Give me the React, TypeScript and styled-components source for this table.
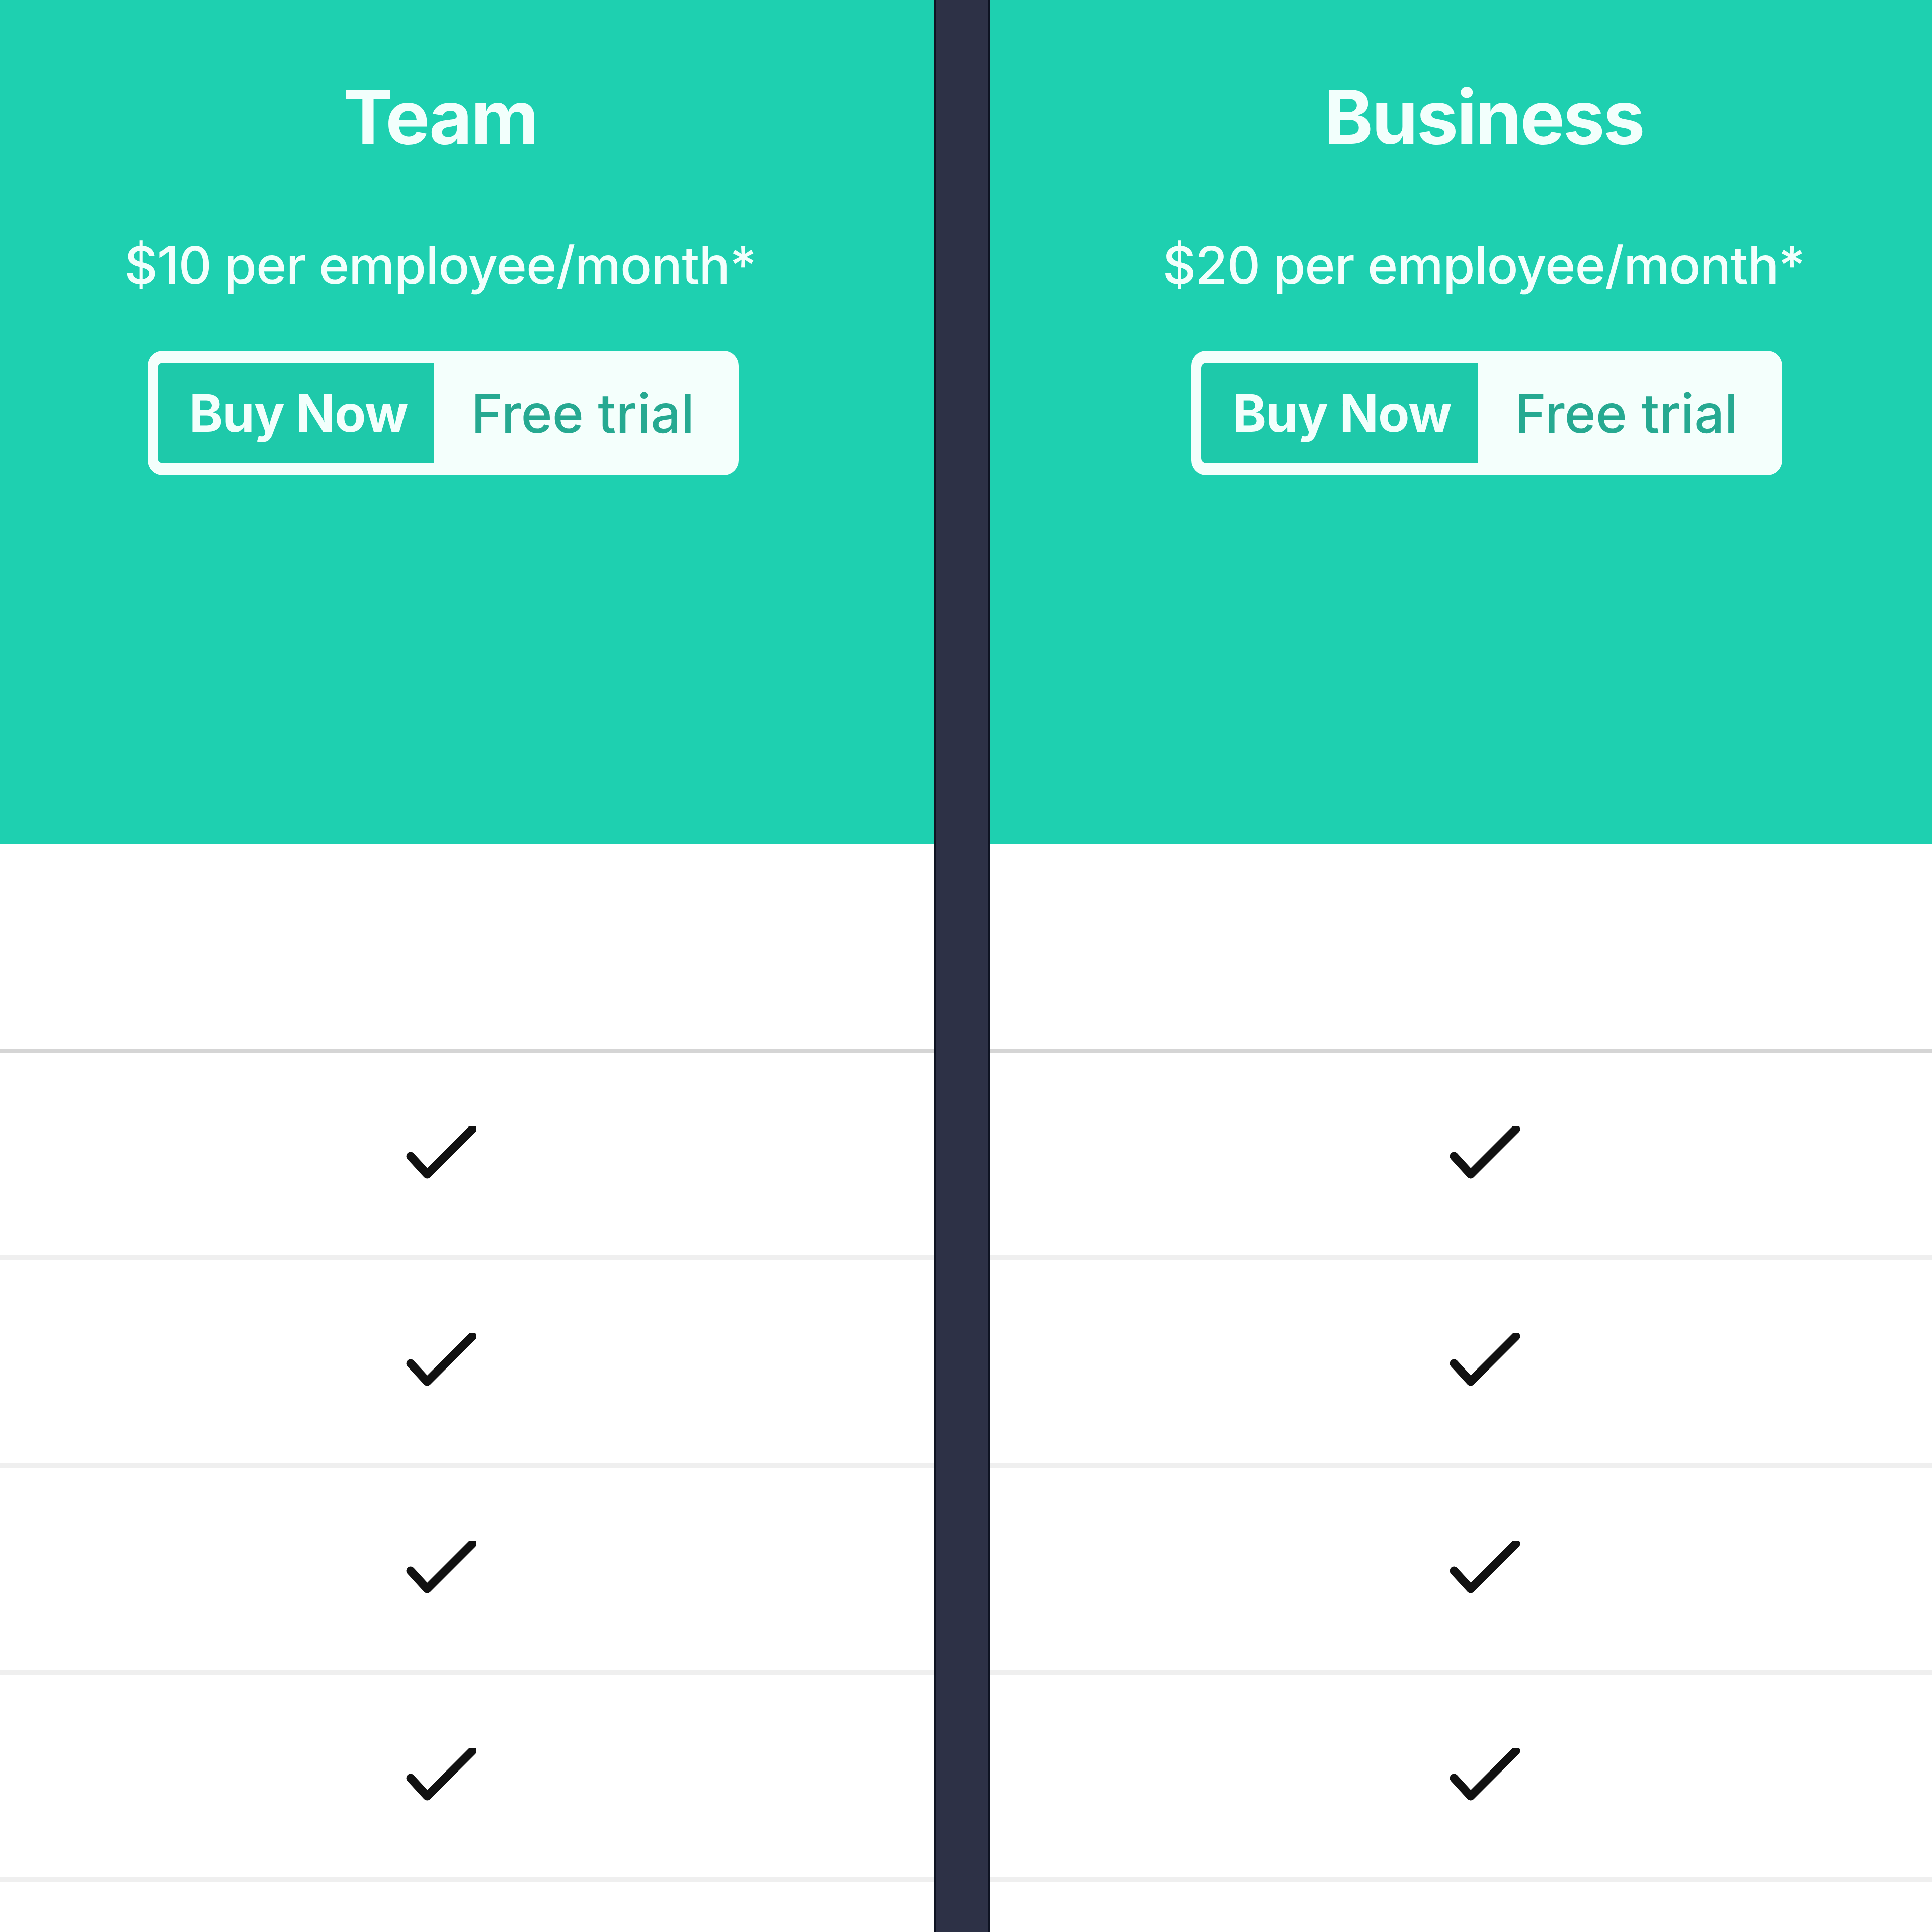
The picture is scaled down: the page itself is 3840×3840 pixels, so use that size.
import React from "react";
import styled, { createGlobalStyle } from "styled-components";

const GlobalStyle = createGlobalStyle`
  html, body {
    margin: 0;
    padding: 0;
    background: #ffffff;
  }

  body {
    font-family: Inter, "Noto Sans", "Liberation Sans", sans-serif;
    overflow: hidden;
  }
`;

const Page = styled.main`
  display: flex;
  width: 3840px;
  height: 3840px;
  overflow: hidden;
  background: #ffffff;
`;

const Column = styled.section<{ $shift?: number }>`
  flex: 0 0 1962px;
  display: flex;
  flex-direction: column;
  margin-left: ${(p) => (p.$shift ? `${p.$shift}px` : "0")};
`;

const Divider = styled.div`
  flex: 0 0 112px;
  box-sizing: border-box;
  background: #2d3146;
  border-left: 5px solid #0e1322;
  border-right: 5px solid #0e1322;
`;

const Header = styled.header`
  flex: 0 0 1678px;
  box-sizing: border-box;
  padding-top: 143px;
  background: #1ed0b0;
  display: flex;
  flex-direction: column;
  align-items: center;
  color: #f2fffc;
`;

const Title = styled.h2`
  margin: 0;
  font-size: 148px;
  line-height: 180px;
  font-weight: 700;
  letter-spacing: -0.02em;
`;

const Price = styled.p`
  margin: 144px 0 0;
  font-size: 103px;
  line-height: 120px;
  font-weight: 500;
  letter-spacing: -0.01em;
`;

const ButtonGroup = styled.div`
  margin: 110px 0 0 12px;
  display: flex;
  align-items: stretch;
  padding: 24px 0 24px 20px;
  background: #f4fffc;
  border-radius: 30px;
`;

const Segment = styled.button<{ $primary?: boolean }>`
  height: 200px;
  border: none;
  margin: 0;
  font-family: Inter, "Noto Sans", "Liberation Sans", sans-serif;
  font-size: ${(p) => (p.$primary ? "102px" : "106px")};
  letter-spacing: ${(p) => (p.$primary ? "-0.01em" : "0")};
  font-weight: ${(p) => (p.$primary ? 700 : 500)};
  color: ${(p) => (p.$primary ? "#f2fffc" : "#26a991")};
  background: ${(p) => (p.$primary ? "#1ec9aa" : "transparent")};
  border-radius: ${(p) => (p.$primary ? "10px 0 0 10px" : "0")};
  padding: ${(p) => (p.$primary ? "0 52px 0 62px" : "0 88px 0 74px")};
`;

const Row = styled.div<{ $strong?: boolean; $height: number }>`
  flex: 0 0 ${(p) => p.$height}px;
  box-sizing: border-box;
  border-bottom: ${(p) => (p.$strong ? "8px solid #d5d5d5" : "10px solid #efefef")};
  display: flex;
  align-items: center;
  justify-content: center;
`;

const Check = () => (
  <svg width="143" height="112" viewBox="0 0 143 112" fill="none">
    <path
      d="M12 60 L45 96 L135 6"
      stroke="#111111"
      strokeWidth="17"
      strokeLinecap="round"
      strokeLinejoin="round"
    />
  </svg>
);

const plans = [
  { name: "Team", price: "$10 per employee/month*", shift: -106 },
  { name: "Business", price: "$20 per employee/month*", shift: 0 },
];

const features = [1, 2, 3, 4];

const Plan: React.FC<{ name: string; price: string; shift: number }> = ({
  name,
  price,
  shift,
}) => (
  <Column $shift={shift}>
    <Header>
      <Title>{name}</Title>
      <Price>{price}</Price>
      <ButtonGroup>
        <Segment $primary>Buy Now</Segment>
        <Segment>Free trial</Segment>
      </ButtonGroup>
    </Header>
    <Row $strong $height={415} />
    {features.map((f) => (
      <Row key={f} $height={412}>
        <Check />
      </Row>
    ))}
    <Row $height={412} />
  </Column>
);

export default function App() {
  return (
    <>
      <GlobalStyle />
      <Page>
        <Plan {...plans[0]} />
        <Divider />
        <Plan {...plans[1]} />
      </Page>
    </>
  );
}
